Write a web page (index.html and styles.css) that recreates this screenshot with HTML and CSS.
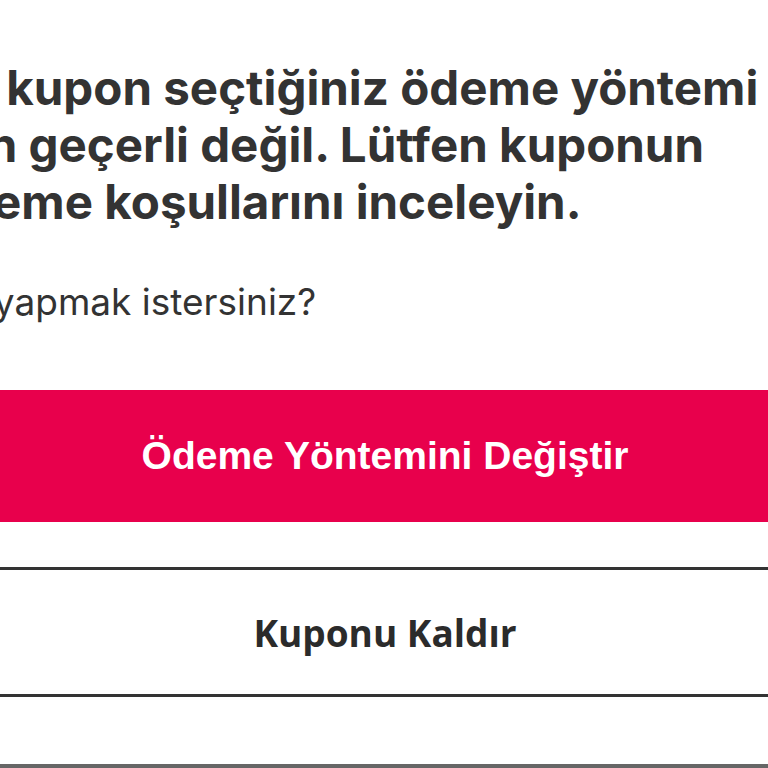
FILE: index.html
```html
<!DOCTYPE html>
<html>
  <head>
    <title>Kupon</title>
    <link rel="stylesheet" href="styles.css">
  </head>
  <body>
    <div class="sheet">
      <div class="message">
        <h2 class="title">Bu kupon seçtiğiniz ödeme yöntemi<br>için geçerli değil. Lütfen kuponun<br>ödeme koşullarını inceleyin.</h2>
        <p class="question">Ne yapmak istersiniz?</p>
      </div>

      <div class="actions">
        <button class="btn btn-primary">Ödeme Yöntemini Değiştir</button>
        <button class="btn btn-outline">Kuponu Kaldır</button>
      </div>

      <div class="bottom-bar"></div>
    </div>
  </body>
</html>
```

FILE: styles.css
```css
html, body {
  margin: 0;
  padding: 0;
  background-color: #fff;
  overflow: hidden;
}

.sheet {
  width: 770px;
  height: 768px;
  display: flex;
  flex-direction: column;
  color: #333;
}

.message {
  margin-left: -66px;
}

.title {
  font-family: Inter, "Noto Sans", sans-serif;
  font-weight: 700;
  font-size: 47.5px;
  line-height: 57px;
  margin: 59px 0 0 0;
  white-space: nowrap;
}

.question {
  font-family: Inter, "Noto Sans", sans-serif;
  font-weight: 400;
  font-size: 37px;
  line-height: 40px;
  margin: 52px 0 0 0;
  white-space: nowrap;
}

.actions {
  display: flex;
  flex-direction: column;
  margin-top: 68px;
  gap: 45px;
}

.btn {
  display: block;
  width: 100%;
  border: none;
  padding: 0;
  margin: 0;
  cursor: pointer;
}

.btn-primary {
  height: 132px;
  background-color: #e8004c;
  color: #fff;
  font-family: "Liberation Sans", Arial, sans-serif;
  font-weight: 700;
  font-size: 39px;
}

.btn-outline {
  height: 130px;
  background-color: #fff;
  border-top: 3px solid #333;
  border-bottom: 3px solid #333;
  color: #2b2b2b;
  font-family: "Open Sans", "Noto Sans", sans-serif;
  font-weight: 700;
  font-size: 37px;
}

.bottom-bar {
  margin-top: auto;
  height: 4px;
  background-color: #666;
}
```
